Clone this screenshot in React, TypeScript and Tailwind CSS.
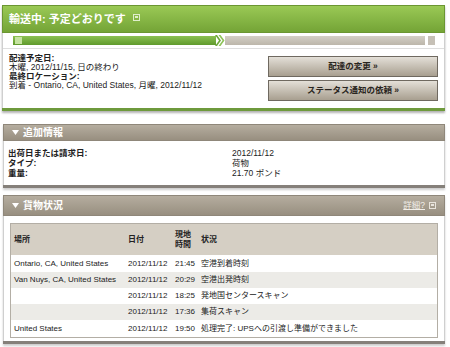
import React from "react";

const font = "font-[family-name:'Liberation_Sans','Noto_Sans_CJK_JP',sans-serif]";

function PopIcon({ className = "" }: { className?: string }) {
  return (
    <svg width="7" height="7" viewBox="0 0 7 7" className={className}>
      <rect x="0.5" y="0.5" width="6" height="6" fill="none" stroke="currentColor" strokeWidth="1" />
      <rect x="2" y="2" width="3" height="2" fill="currentColor" />
    </svg>
  );
}

function Tri() {
  return (
    <svg width="7" height="5" viewBox="0 0 7 5" className="mr-[4px]">
      <path d="M0 0 L7 0 L3.5 5 Z" fill="#ffffff" />
    </svg>
  );
}

function SectionHeader({ title, h, right }: { title: string; h: string; right?: React.ReactNode }) {
  return (
    <div
      className={`${h} flex items-center justify-between pl-[8px] pr-[8px] bg-gradient-to-b from-[#b5ad9f] to-[#988f80] border border-[#8f877a]`}
    >
      <div className="flex items-center text-white font-bold text-[10px] leading-none">
        <Tri />
        <span>{title}</span>
      </div>
      {right}
    </div>
  );
}

const rows = [
  ["Ontario, CA, United States", "2012/11/12", "21:45", "空港到着時刻"],
  ["Van Nuys, CA, United States", "2012/11/12", "20:29", "空港出発時刻"],
  ["", "2012/11/12", "18:25", "発地国センタースキャン"],
  ["", "2012/11/12", "17:36", "集荷スキャン"],
  ["United States", "2012/11/12", "19:50", "処理完了: UPSへの引渡し準備ができました"],
];

const rowH = ["h-[17px]", "h-[16px]", "h-[16px]", "h-[16px]", "h-[17px]"];

export default function App() {
  return (
    <div className={`w-[450px] h-[347px] bg-white overflow-hidden text-[#222] ${font}`}>
      {/* Panel 1 */}
      <div className="ml-[2px] mt-[5px] w-[443px] shadow-[0_2px_2px_rgba(0,0,0,0.3)]">
        <div className="h-[28px] flex items-center gap-[7px] px-[6px] bg-gradient-to-b from-[#9ac955] to-[#74a436] border border-[#6b9632]">
          <span className="text-white font-bold text-[11px] leading-none">輸送中: 予定どおりです</span>
          <PopIcon className="text-[#dfeecb] -mt-[3px]" />
        </div>
        <div className="border-x border-[#cfcfcf] bg-white">
          <div className="h-[16px] flex items-center pl-[10px] pr-[9px] border-b border-[#dedede]">
            <div className="w-[203px] h-[9px] bg-gradient-to-b from-[#8cc152] to-[#5f9a2c] flex items-center pl-[2px]">
              <div className="w-[7px] h-[7px] bg-[#c5e3a0]" />
            </div>
            <svg width="10" height="11" viewBox="0 0 10 11" className="-ml-[1px]">
              <path d="M0 0 L4 5.5 L0 11 L2 11 L6 5.5 L2 0 Z" fill="#6ea83a" />
              <path d="M3.5 0 L7.5 5.5 L3.5 11 L5.5 11 L9.5 5.5 L5.5 0 Z" fill="#8dc257" />
            </svg>
            <div className="flex-1 h-[9px] bg-gradient-to-b from-[#d4cfc6] to-[#bcb6aa]" />
            <div className="ml-[3px] w-[7px] h-[9px] bg-[#c6c0b6]" />
          </div>
          <div className="flex justify-between pl-[6px] pr-[6px] py-[7px]">
            <div className="text-[8.5px] leading-[9px]">
              <div className="font-bold mt-[-2px]">配達予定日:</div>
              <div>木曜, 2012/11/15, 日の終わり</div>
              <div className="font-bold">最終ロケーション:</div>
              <div>到着 - Ontario, CA, United States, 月曜, 2012/11/12</div>
            </div>
            <div className="w-[170px] flex flex-col gap-[3px]">
              <div className="h-[21px] flex items-center justify-center border border-[#6f6960] bg-gradient-to-b from-[#e4e0d8] to-[#a89f90] text-[8.5px] font-bold text-[#2a2520]">
                配達の変更 »
              </div>
              <div className="h-[21px] flex items-center justify-center border border-[#6f6960] bg-gradient-to-b from-[#e4e0d8] to-[#a89f90] text-[8.5px] font-bold text-[#2a2520]">
                ステータス通知の依頼 »
              </div>
            </div>
          </div>
        </div>
        <div className="h-[3px] bg-[#6e9a3c]" />
      </div>

      {/* Panel 2 */}
      <div className="ml-[3px] mt-[13px] w-[442px] shadow-[0_2px_2px_rgba(0,0,0,0.2)]">
        <SectionHeader title="追加情報" h="h-[17px]" />
        <div className="border-x border-[#cfcfcf] bg-white pl-[4px] py-[7px] text-[8.5px] leading-[10px]">
          <div className="grid grid-cols-[224px_1fr]">
            <div className="font-bold">出荷日または請求日:</div>
            <div>2012/11/12</div>
            <div className="font-bold">タイプ:</div>
            <div>荷物</div>
            <div className="font-bold">重量:</div>
            <div>21.70 ポンド</div>
          </div>
        </div>
        <div className="h-[3px] bg-[#85807a]" />
      </div>

      {/* Panel 3 */}
      <div className="ml-[3px] mt-[7px] w-[442px] shadow-[0_2px_2px_rgba(0,0,0,0.2)]">
        <SectionHeader
          title="貨物状況"
          h="h-[21px]"
          right={
            <div className="flex items-center gap-[4px] text-[8.5px] text-[#f2efe9] leading-none">
              <span className="underline">詳細?</span>
              <PopIcon className="text-[#e8e4dc]" />
            </div>
          }
        />
        <div className="border-x border-[#cfcfcf] bg-white pl-[6px] pr-[6px] pt-[7px] pb-[3px]">
          <div className="border border-[#b3aea5] text-[8px]">
            <div className="grid grid-cols-[113px_47px_26px_1fr] h-[31px] items-center bg-[#d5cfc4] font-bold leading-[10px]">
              <div className="pl-[3px]">場所</div>
              <div className="pl-[4px]">日付</div>
              <div className="pl-[4px]">
                <div>現地</div>
                <div>時間</div>
              </div>
              <div className="pl-[4px]">状況</div>
            </div>
            {rows.map((r, i) => (
              <div
                key={i}
                className={`grid grid-cols-[113px_47px_26px_1fr] items-center ${rowH[i]} ${i % 2 === 0 ? "bg-white" : "bg-[#ecebe7]"}`}
              >
                <div className="pl-[3px] whitespace-nowrap">{r[0]}</div>
                <div className="pl-[4px] whitespace-nowrap">{r[1]}</div>
                <div className="pl-[4px] whitespace-nowrap">{r[2]}</div>
                <div className="pl-[4px] whitespace-nowrap">{r[3]}</div>
              </div>
            ))}
          </div>
        </div>
        <div className="h-[3px] bg-[#85807a]" />
      </div>
    </div>
  );
}
